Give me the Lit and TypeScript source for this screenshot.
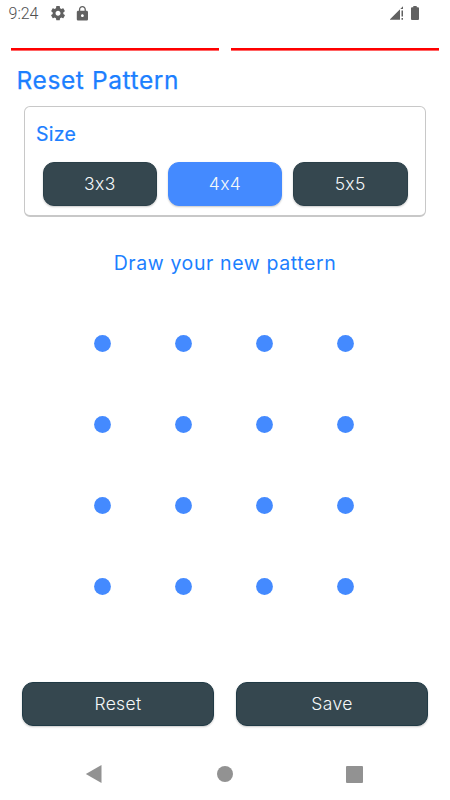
import { LitElement, html, css } from "lit";
import { customElement, state } from "lit/decorators.js";

@customElement("app-root")
export class AppRoot extends LitElement {
  @state() private size = 4;

  static styles = css`
    :host { display: block; height: 800px; background: #fff; font-family: Inter, "Noto Sans", sans-serif; }
    * { box-sizing: border-box; }
    .screen { height: 100%; display: flex; flex-direction: column; overflow: hidden; font-feature-settings: "calt" 0; }
    .status { height: 28px; flex: none; display: flex; align-items: flex-start; justify-content: space-between; }
    .left { display: flex; }
    .time { font: 300 16px/19px Roboto, sans-serif; padding: 4px 0 0 8.5px; width: 50px; color: #505050; }
    svg { display: block; }
    .rules { display: flex; gap: 11.5px; padding: 20px 11px 0; flex: none; height: 39px; }
    .rule { flex: 1; height: 3px; background: linear-gradient(#f00 0 2px, #ff6464 2px); }
    .title { margin-left: 16.5px; font-size: 24.5px; line-height: 27px; font-weight: 400; letter-spacing: .6px; -webkit-text-stroke: .25px #1c7fff; color: #1c7fff; height: 28px; flex: none; }
    .card { margin: 11px 24px 0; height: 111px; flex: none; border: 1px solid #c8c8c8; border-bottom-width: 2px; border-radius: 6px; padding: 15px 17.5px 0 17.5px; }
    .label { margin-left: -6.5px; font-size: 19.5px; line-height: 24px; font-weight: 400; letter-spacing: .3px; -webkit-text-stroke: .2px #1c7fff; color: #1c7fff; }
    .sizes { display: flex; gap: 10.5px; margin-top: 16px; }
    .btn { flex: 1; height: 44px; border: 1px solid #203a45; border-radius: 11px; background: #35474f; color: #f4f8f9; font: 300 17.5px/42px Inter, sans-serif; font-feature-settings: "calt" 0; letter-spacing: .35px; text-align: center; padding: 0; box-shadow: 0 1px 2px rgba(0,0,0,.22); }
    .sizes .btn { border-color: #2b4049; }
    .sizes .btn.on { background: #448aff; border-color: #448aff; }
    .prompt { margin: 33px 0 0; text-align: center; font-size: 19.5px; line-height: 26px; font-weight: 400; color: #1c7fff; letter-spacing: .6px; flex: none; }
    .grid { display: grid; grid-template-columns: repeat(4, 80.9px); grid-auto-rows: 81px; margin: 27px 0 0 62.4px; place-items: center; flex: none; }
    svg.dot { width: 17px; height: 17px; fill: #448aff; }
    .actions { display: flex; gap: 22px; padding: 0 22px; margin-top: 55px; flex: none; }
    .nav { display: flex; justify-content: space-between; align-items: center; margin: 36px 87px 0 85px; height: 24px; flex: none; }
  `;

  render() {
    return html`<div class="screen">
      <div class="status">
        <div class="left">
          <div class="time">9:24</div>
          <svg width="40" height="28" viewBox="50 0 40 28" fill="#616161">
            <g transform="translate(49.5 4.7) scale(.71)"><path d="M19.43 12.98c.04-.32.07-.64.07-.98s-.03-.66-.07-.98l2.11-1.65c.19-.15.24-.42.12-.64l-2-3.46c-.12-.22-.39-.3-.61-.22l-2.49 1c-.52-.4-1.08-.73-1.69-.98l-.38-2.65C14.46 2.18 14.25 2 14 2h-4c-.25 0-.46.18-.49.42l-.38 2.65c-.61.25-1.17.59-1.69.98l-2.49-1c-.23-.09-.49 0-.61.22l-2 3.46c-.13.22-.07.49.12.64l2.11 1.65c-.04.32-.07.65-.07.98s.03.66.07.98l-2.11 1.65c-.19.15-.24.42-.12.64l2 3.46c.12.22.39.3.61.22l2.49-1c.52.4 1.08.73 1.69.98l.38 2.65c.03.24.24.42.49.42h4c.25 0 .46-.18.49-.42l.38-2.65c.61-.25 1.17-.59 1.69-.98l2.49 1c.23.09.49 0 .61-.22l2-3.46c.12-.22.07-.49-.12-.64l-2.11-1.65zM12 15.5c-1.93 0-3.5-1.57-3.5-3.5s1.57-3.5 3.5-3.5 3.5 1.57 3.5 3.5-1.57 3.5-3.5 3.5z"/></g>
            <g transform="translate(74 5.2) scale(.7)"><path d="M18 8h-1V6c0-2.76-2.24-5-5-5S7 3.24 7 6v2H6c-1.1 0-2 .9-2 2v10c0 1.1.9 2 2 2h12c1.1 0 2-.9 2-2V10c0-1.1-.9-2-2-2zm-6 9c-1.1 0-2-.9-2-2s.9-2 2-2 2 .9 2 2-.9 2-2 2zm3.1-9H8.900V6c0-1.710 1.390-3.100 3.100-3.100s3.100 1.390 3.100 3.100v2z"/></g>
          </svg>
        </div>
        <svg width="60" height="28" viewBox="390 0 60 28" fill="#616161">
          <path d="M389.500 19.800L403 6.300V9h-3v10.800z"/><path d="M401.500 10.500h1.500v6h-1.500zM401.500 18h1.500v1.800h-1.500z"/>
          <path d="M411 8.300q0-1 1-1h1.300V6h3.400v1.300h1.300q1 0 1 1v10.700q0 1-1 1h-6q-1 0-1-1z"/>
        </svg>
      </div>
      <div class="rules"><div class="rule"></div><div class="rule"></div></div>
      <div class="title">Reset Pattern</div>
      <div class="card">
        <div class="label">Size</div>
        <div class="sizes">
          ${[3, 4, 5].map((n) => html`<button class="btn ${n === this.size ? "on" : ""}" @click=${() => (this.size = n)}>${n}x${n}</button>`)}
        </div>
      </div>
      <div class="prompt">Draw your new pattern</div>
      <div class="grid">${Array.from({ length: 16 }, () => html`<svg class="dot" viewBox="0 0 17 17"><circle cx="8.5" cy="8.5" r="8.4"/></svg>`)}</div>
      <div class="actions"><button class="btn">Reset</button><button class="btn">Save</button></div>
      <div class="nav">
        <svg width="18" height="20" viewBox="0 0 18 20"><path d="M.8 10L16.5 1v18z" fill="#929292"/></svg>
        <svg width="16" height="16" viewBox="0 0 16 16"><circle cx="8" cy="8" r="8" fill="#929292"/></svg>
        <svg width="17" height="17" viewBox="0 0 17 17"><rect width="17" height="17" rx="1" fill="#929292"/></svg>
      </div>
    </div>`;
  }
}
